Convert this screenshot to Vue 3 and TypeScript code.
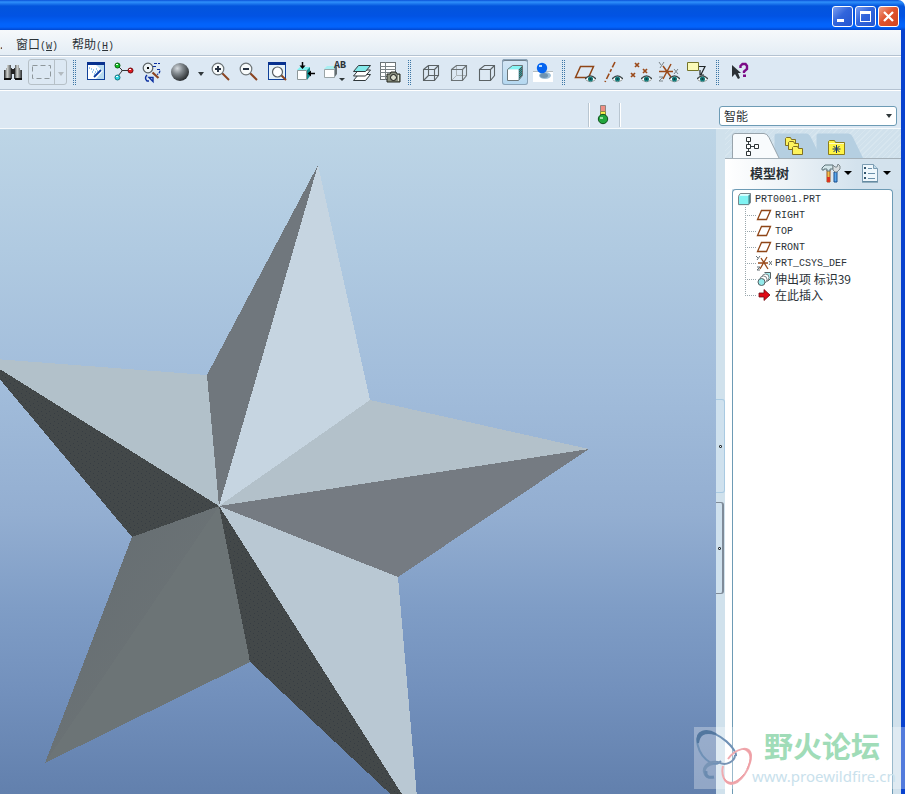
<script setup lang="ts">
import { ref } from 'vue'

interface Tool {
  icon: string
  label: string
  menu?: boolean
  badge?: string
}

interface TreeNode {
  icon: string
  text: string
  cjk?: boolean
}

const viewTools: Tool[] = [
  { icon: 'repaint', label: '重画' },
  { icon: 'spin-center', label: '旋转中心' },
  { icon: 'orient-mode', label: '定向模式' },
  { icon: 'sphere', label: '外观', menu: true },
  { icon: 'zoom-in', label: '放大' },
  { icon: 'zoom-out', label: '缩小' },
  { icon: 'refit', label: '重新调整' },
  { icon: 'reorient', label: '重定向' },
  { icon: 'saved-views', label: '已保存视图', badge: 'AB' },
  { icon: 'layers', label: '层' },
  { icon: 'view-manager', label: '视图管理器' },
]

const displayTools: Tool[] = [
  { icon: 'wireframe', label: '线框' },
  { icon: 'hidden-line', label: '隐藏线' },
  { icon: 'no-hidden', label: '无隐藏线' },
  { icon: 'shaded', label: '着色' },
  { icon: 'realism', label: '增强的真实感' },
]

const datumTools: Tool[] = [
  { icon: 'planes', label: '平面显示' },
  { icon: 'axes', label: '轴显示' },
  { icon: 'points', label: '点显示' },
  { icon: 'csys', label: '坐标系显示' },
  { icon: 'notes', label: '注释显示' },
]

const treeNodes: TreeNode[] = [
  { icon: 'n-plane', text: 'RIGHT' },
  { icon: 'n-plane', text: 'TOP' },
  { icon: 'n-plane', text: 'FRONT' },
  { icon: 'n-csys', text: 'PRT_CSYS_DEF' },
  { icon: 'n-protrusion', text: '伸出项 标识39', cjk: true },
  { icon: 'n-insert', text: '在此插入', cjk: true },
]

const tabs: Tool[] = [
  { icon: 't-tree', label: '模型树' },
  { icon: 't-folders', label: '文件夹浏览器' },
  { icon: 't-favorites', label: '收藏夹' },
]

const display = ref('shaded')
const activeTab = ref('t-tree')
const filter = ref('智能')
</script>

<template>
  <div class="window">
    <svg class="sprite" aria-hidden="true">
      <defs>
        <radialGradient id="gray-ball" cx="0.35" cy="0.3" r="0.75">
          <stop offset="0" stop-color="#d5dade" />
          <stop offset="0.4" stop-color="#82898e" />
          <stop offset="1" stop-color="#24282b" />
        </radialGradient>
        <linearGradient id="barrel" x1="0" x2="1" y1="0" y2="0">
          <stop offset="0" stop-color="#15181a" />
          <stop offset="0.4" stop-color="#d2d5d2" />
          <stop offset="1" stop-color="#2a2d2f" />
        </linearGradient>
        <pattern id="teal-check" width="2" height="2" patternUnits="userSpaceOnUse">
          <rect width="2" height="2" fill="#4b5254" />
          <rect width="1" height="1" fill="#2aa0a0" />
          <rect x="1" y="1" width="1" height="1" fill="#2aa0a0" />
        </pattern>
      </defs>

      <symbol id="eye" viewBox="0 0 12 8">
        <path d="M0 4 L3 1 H9 L12 4 L9 7 H3 Z" fill="#fff" />
        <path d="M0 4 Q6 -3 12 4" fill="none" stroke="#3c4446" stroke-width="1.4" />
        <path d="M1 5 Q6 9 11 5" fill="none" stroke="#8b8f8f" />
        <circle cx="6" cy="4" r="2.8" fill="#127b7a" />
        <rect x="5" y="3" width="2" height="2" fill="#103b40" />
      </symbol>

      <symbol id="binoculars" viewBox="0 0 24 24">
        <path d="M6 5h4v3h1v11H3v-9h2V8h1z" fill="url(#barrel)" />
        <path d="M14 5h4v3h1v2h2v9h-8V8h1z" fill="url(#barrel)" />
        <path d="M10 9h4v5h-4z" fill="#222" />
        <path d="M3 18h7v2H3zM14 18h7v2h-7z" fill="#111" />
      </symbol>

      <symbol id="repaint" viewBox="0 0 24 24">
        <rect x="3.500" y="2.500" width="17" height="17" fill="#fff" stroke="#11419a" />
        <path d="M12 5h8v14h-8l7-8z" fill="#b9dcf0" />
        <path d="M3 2h18v3H3z" fill="#08318e" />
        <path d="M10 17l7-7" stroke="#0b3da0" stroke-width="1.800" />
        <path d="M5 8h1M7 9h1M9 10h1M11 12h1M8 12h1M10 14h1M12 9h1M13 11h1" stroke="#2b8bd8" />
      </symbol>

      <symbol id="spin-center" viewBox="0 0 24 24">
        <path d="M6 6l4 4v1l-4 5M10 10.500h7" fill="none" stroke="#333" />
        <circle cx="5.500" cy="5.500" r="2.500" fill="#0fc322" stroke="#0a5d12" />
        <circle cx="5.500" cy="17.500" r="2.500" fill="#2fd7e4" stroke="#14747d" />
        <circle cx="18.500" cy="10.500" r="2.500" fill="#e01a22" stroke="#6e0b10" />
        <path d="M4 4h2v1H4zM4 16h2v1H4zM17 9h2v1h-2z" fill="#fff" />
      </symbol>

      <symbol id="orient-mode" viewBox="0 0 24 24">
        <path d="M12.500 12.500l6 5.500" stroke="#8a4421" stroke-width="2.300" />
        <circle cx="8" cy="8" r="4.800" fill="#eef4f6" stroke="#596063" stroke-width="1.200" />
        <path d="M7 7h2v2H7z" fill="#000" />
        <path d="M14 3.500h6M13 6.500h3M17 9.500h3q0 4-3 5" fill="none" stroke="#0b2fa0" stroke-width="1.200" stroke-dasharray="3 1" />
        <path d="M7 15q-3 3 0 6h2M13 17.500H9l4 4z" fill="none" stroke="#0b2fa0" stroke-width="1.400" />
      </symbol>

      <symbol id="sphere" viewBox="0 0 24 24">
        <circle cx="12" cy="12" r="9" fill="url(#gray-ball)" />
      </symbol>

      <symbol id="zoom-in" viewBox="0 0 24 24">
        <path d="M13 13l7 7" stroke="#8a4421" stroke-width="2" />
        <circle cx="9" cy="9" r="5.800" fill="#f8fbfb" stroke="#6d7477" stroke-width="1.200" />
        <path d="M8 6h2v2h2v2h-2v2H8v-2H6V8h2z" fill="#26303f" />
      </symbol>

      <symbol id="zoom-out" viewBox="0 0 24 24">
        <path d="M13 13l7 7" stroke="#8a4421" stroke-width="2" />
        <circle cx="9" cy="9" r="5.800" fill="#f8fbfb" stroke="#6d7477" stroke-width="1.200" />
        <path d="M6 8h6v2H6z" fill="#26303f" />
      </symbol>

      <symbol id="refit" viewBox="0 0 24 24">
        <rect x="3.500" y="2.500" width="17" height="17" fill="#e6f2f8" stroke="#11419a" />
        <path d="M3 2h18v3H3z" fill="#08318e" />
        <path d="M16 15l5 5" stroke="#8a4421" stroke-width="2" />
        <circle cx="12.500" cy="12" r="5" fill="#fff" stroke="#596063" stroke-width="1.200" />
      </symbol>

      <symbol id="reorient" viewBox="0 0 24 24">
        <path d="M4 10l3-3h10l-3 3z" fill="#7ff0f0" />
        <path d="M14 10l3-3v9l-3 4z" fill="#168f90" />
        <path d="M4.500 10.500h9v9h-9z" fill="#fff" stroke="#8d9799" />
        <path d="M9.500 2v5M16 13.500h6" stroke="#000" stroke-width="1.500" />
        <path d="M6.500 5.500h6l-3 3.500zM18 10.500v6L14.500 13.500z" fill="#000" />
      </symbol>

      <symbol id="saved-views" viewBox="0 0 24 24">
        <path d="M3 9l3-3h10l-3 3z" fill="#a9eff2" />
        <path d="M13 9l3-3v8l-3 4z" fill="#646d70" />
        <path d="M3.500 9.500h10v8h-10z" fill="#fff" stroke="#9aa4a7" />
        <path d="M18 18h6l-3 3z" fill="#30383b" />
      </symbol>

      <symbol id="layers" viewBox="0 0 24 24">
        <g stroke="#30383b" stroke-linejoin="round">
          <path d="M4.500 20.500l5-6h12l-5 6z" fill="#fff" />
          <path d="M4.500 16l5-6h12l-5 6z" fill="#fff" />
          <path d="M4.500 11.500l5-6h12l-5 6z" fill="#83e9ea" />
        </g>
      </symbol>

      <symbol id="view-manager" viewBox="0 0 24 24">
        <rect x="3.500" y="2.500" width="15" height="17" fill="#fff" stroke="#6b7376" />
        <path d="M3 6.500h16M3 9.500h16M3 12.500h16M3 16.500h16M8.500 2v18" stroke="#7c8487" />
        <path d="M10 14h3l1-2h5l1 2h3v8H10z" fill="#8a8f80" stroke="#23261f" />
        <circle cx="16.500" cy="17.500" r="3" fill="#d9dccb" stroke="#111" />
        <path d="M21 15h1v6h-1z" fill="#e0e3d5" />
      </symbol>

      <symbol id="wireframe" viewBox="0 0 24 24">
        <path d="M4.500 9.500h11v11h-11zM9.500 5.500h10v10h-10zM4.500 9.500l5-4M15.500 9.500l4-4M15.500 20.500l4-5M4.500 20.500l5-5" fill="none" stroke="#5b6265" stroke-width="1.100" />
      </symbol>

      <symbol id="hidden-line" viewBox="0 0 24 24">
        <path d="M9.500 5.500v10h10M4.500 20.500l5-5" fill="none" stroke="#adb5b9" />
        <path d="M4.500 9.500h11v11h-11zM4.500 9.500l5-4h10v10l-4 5M15.500 9.500l4-4" fill="none" stroke="#6b7275" stroke-width="1.100" />
      </symbol>

      <symbol id="no-hidden" viewBox="0 0 24 24">
        <path d="M4.500 9.500h11v11h-11zM4.500 9.500l5-4h10v10l-4 5M15.500 9.500l4-4" fill="none" stroke="#5b6265" stroke-width="1.100" />
      </symbol>

      <symbol id="shaded" viewBox="0 0 24 24">
        <path d="M4.500 9.500l5-4h10l-4 4z" fill="#86f4f3" />
        <path d="M15.500 9.500l4-4v10l-4 5z" fill="url(#teal-check)" />
        <path d="M4.500 9.500h11v11h-11z" fill="#fff" />
        <path d="M15.500 20.500h-11v-11l5-4h10v10z" fill="none" stroke="#6c7679" />
      </symbol>

      <symbol id="realism" viewBox="0 0 24 24">
        <path d="M2 11h20v11H2z" fill="#fff" />
        <path d="M2 11.500h20" stroke="#b4bcc0" />
        <ellipse cx="14" cy="15.500" rx="6" ry="3.500" fill="#9cbdd6" />
        <ellipse cx="13" cy="15.500" rx="4" ry="2.500" fill="#6f93b0" />
        <circle cx="11" cy="8" r="5.200" fill="#0564f0" />
        <path d="M8 5h3v2H8z" fill="#b7dcff" />
      </symbol>

      <symbol id="planes" viewBox="0 0 24 24">
        <path d="M7.500 6.500h13l-5 11h-13z" fill="none" stroke="#8f4516" stroke-width="1.500" />
        <use href="#eye" x="12" y="15" width="11" height="8" />
      </symbol>

      <symbol id="axes" viewBox="0 0 24 24">
        <path d="M14 2L4 22" stroke="#9a4a1a" stroke-width="1.600" stroke-dasharray="6 2 3 2" />
        <use href="#eye" x="11" y="15" width="11" height="8" />
      </symbol>

      <symbol id="points" viewBox="0 0 24 24">
        <path d="M6 3l4 4m0-4l-4 4M14 9l4 4m0-4l-4 4M2 13l4 4m0-4l-4 4" stroke="#9a4a1a" stroke-width="1.700" />
        <use href="#eye" x="12" y="15" width="11" height="8" />
      </symbol>

      <symbol id="csys" viewBox="0 0 24 24">
        <path d="M2 11.500h14M6 19l8-15M6 6l8 11" stroke="#9a4a1a" stroke-width="1.500" />
        <path d="M2 2l2 3m3-3L3 8M17 9l4 5m0-5l-4 5M2 17h4l-4 4h4" fill="none" stroke="#7b8489" />
        <use href="#eye" x="12" y="15" width="11" height="8" />
      </symbol>

      <symbol id="notes" viewBox="0 0 24 24">
        <path d="M2.500 2.500h11v8h-11z" fill="#fbfbb8" stroke="#75752a" />
        <path d="M14 6.500h6l-4 8M15 10v5h4" fill="none" stroke="#202628" stroke-width="1.200" />
        <use href="#eye" x="12" y="15" width="11" height="8" />
      </symbol>

      <symbol id="help" viewBox="0 0 24 24">
        <path d="M5 5v12l3-3 3 5 2-1-2-5h3z" fill="#2b3136" />
        <path d="M13.500 8V6l2-2h3l1.500 2v3l-3 2.500V13" fill="none" stroke="#7b0b86" stroke-width="2.400" />
        <path d="M16 14.500h3V17h-3z" fill="#7b0b86" />
      </symbol>

      <symbol id="n-part" viewBox="0 0 14 14">
        <path d="M1 3l2-2h10l-2 2z" fill="#d9ffff" />
        <path d="M11 3l2-2v10l-2 2z" fill="#3b8b91" />
        <path d="M1 3h10v10H1z" fill="#7ff3f3" />
        <path d="M.500 12.500v-9l2-3h11v10l-2 2z" fill="none" stroke="#69777c" />
      </symbol>
      <symbol id="n-plane" viewBox="0 0 16 16">
        <path d="M5.500 3.500h9l-4 9h-9z" fill="#fff" stroke="#8f4516" stroke-width="1.300" />
      </symbol>
      <symbol id="n-csys" viewBox="0 0 16 16">
        <path d="M2 8h10M4 14l7-12M5 3l7 11" stroke="#9a4a1a" stroke-width="1.300" />
        <path d="M0 1l2 2m2-2L1 5M13 6l3 4m0-4l-3 4M1 12h3l-3 3h3" fill="none" stroke="#667075" />
      </symbol>
      <symbol id="n-protrusion" viewBox="0 0 16 16">
        <path d="M8.500 1.500h6v6l-3 3" fill="#a9eff0" stroke="#566063" />
        <circle cx="9.500" cy="6.500" r="3.500" fill="#fff" stroke="#7c8588" />
        <circle cx="7.500" cy="8.500" r="3.500" fill="#fff" stroke="#7c8588" />
        <circle cx="5.500" cy="11" r="3.500" fill="#93eaeb" stroke="#566063" />
      </symbol>
      <symbol id="n-insert" viewBox="0 0 16 16">
        <path d="M3 6h5V2.500L14 8l-6 5.500V10H3z" fill="#e00b17" stroke="#6c0a10" stroke-width="0.800" />
      </symbol>

      <symbol id="t-tree" viewBox="0 0 20 20">
        <path d="M5.500 5v10M8 10.500h5" stroke="#3c4447" />
        <path d="M3.500 1.500h4v4h-4zM3.500 8.500h4v4h-4zM3.500 15.500h4v4h-4zM11.500 8.500h4v4h-4z" fill="#fff" stroke="#2d3437" />
      </symbol>
      <symbol id="t-folders" viewBox="0 0 20 20">
        <g fill="#fdf35c" stroke="#806f22">
          <path d="M1.500 9.500v-7l1-1h4l1 2h4v6z" />
          <path d="M4.500 13.500v-7l1-1h4l1 2h4v6z" />
          <path d="M8.500 18.500v-7l1-1h4l1 2h4v6z" />
        </g>
      </symbol>
      <symbol id="t-favorites" viewBox="0 0 20 20">
        <path d="M2.500 18.500v-13l1-1h5l1 2h9v12z" fill="#fff445" stroke="#8c7c1b" />
        <path d="M3 7.500h15" stroke="#fffcc5" />
        <path d="M10.500 9v8M6.500 13h8M7.500 10l6 6m0-6l-6 6" stroke="#14306f" />
      </symbol>
    </svg>

    <header class="titlebar">
      <button class="caption" aria-label="最小化">
        <svg viewBox="0 0 19 19"><path d="M4 12h7v3H4z" fill="#fff" /></svg>
      </button>
      <button class="caption" aria-label="最大化">
        <svg viewBox="0 0 19 19"><path d="M4 4h11v11H4zM5 7v7h9V7z" fill="#fff" fill-rule="evenodd" /></svg>
      </button>
      <button class="caption close" aria-label="关闭">
        <svg viewBox="0 0 19 19"><path d="M5 5l9 9m0-9l-9 9" stroke="#fff" stroke-width="2.300" /></svg>
      </button>
    </header>

    <div class="body">
      <nav class="menubar">
        <span class="clipped">.</span>
        <button class="menu">窗口<span class="key">(<u>W</u>)</span></button>
        <button class="menu">帮助<span class="key">(<u>H</u>)</span></button>
      </nav>

      <div class="toolbar">
        <button class="tool lead" aria-label="查找"><svg><use href="#binoculars" /></svg></button>
        <div class="split">
          <button class="split-main" aria-label="选取框" disabled>
            <svg viewBox="0 0 22 16"><rect x="1.500" y="1.500" width="18" height="13" fill="none" stroke="#8e979b" stroke-dasharray="5 3" /></svg>
          </button>
          <button class="split-more" aria-label="更多选取方式" disabled><i class="caret"></i></button>
        </div>
        <span class="grip"></span>
        <template v-for="t in viewTools" :key="t.icon">
          <button class="tool" :aria-label="t.label">
            <svg><use :href="'#' + t.icon" /></svg>
            <span v-if="t.badge" class="badge">{{ t.badge }}</span>
          </button>
          <button v-if="t.menu" class="more" :aria-label="t.label + '选项'"><i class="caret"></i></button>
        </template>
        <span class="grip"></span>
        <button
          v-for="t in displayTools"
          :key="t.icon"
          class="tool"
          :class="{ active: display === t.icon }"
          :aria-label="t.label"
          @click="display = t.icon"
        >
          <svg><use :href="'#' + t.icon" /></svg>
        </button>
        <span class="grip"></span>
        <button v-for="t in datumTools" :key="t.icon" class="tool" :aria-label="t.label">
          <svg><use :href="'#' + t.icon" /></svg>
        </button>
        <span class="grip"></span>
        <button class="tool" aria-label="帮助"><svg><use href="#help" /></svg></button>
      </div>

      <div class="status">
        <div class="signal">
          <svg viewBox="0 0 12 20">
            <path d="M3.500.500h5v6h-5z" fill="#ef8e84" stroke="#8b8580" />
            <path d="M3.500 6.500h5v4h-5z" fill="#fbf04b" stroke="#8b8a45" />
            <circle cx="6" cy="14" r="4.700" fill="#22a63d" stroke="#0d4f1b" />
            <path d="M3 12h3v2H3z" fill="#9be7a4" />
          </svg>
        </div>
        <label class="filter">
          <select v-model="filter" aria-label="选取过滤器">
            <option>智能</option>
            <option>特征</option>
            <option>几何</option>
          </select>
          <i class="caret"></i>
        </label>
      </div>

      <div class="workspace">
        <main class="viewport">
          <svg viewBox="0 129 716 665" preserveAspectRatio="xMinYMin slice" role="img" aria-label="五角星模型" shape-rendering="crispEdges">
            <defs>
              <linearGradient id="tail" x1="0" y1="0" x2="1" y2="1">
                <stop offset="0" stop-color="#646c71" />
                <stop offset="1" stop-color="#707778" />
              </linearGradient>
              <pattern id="dots" width="8" height="8" patternUnits="userSpaceOnUse">
                <rect width="8" height="8" fill="#434849" />
                <path d="M1 3h1v1H1zM5 1h1v1H5zM2 7h1v1H2zM6 5h1v1H6z" fill="#373d43" />
              </pattern>
            </defs>
            <polygon points="-18,358 207,375 219,506" fill="#b2c1ca" />
            <polygon points="-18,358 219,506 132,537" fill="url(#dots)" />
            <polygon points="207,375 318,165 219,506" fill="#70777d" />
            <polygon points="318,165 370,400 219,506" fill="#c6d5e1" />
            <polygon points="370,400 589,449 219,506" fill="#b3c1ca" />
            <polygon points="589,449 398,577 219,506" fill="#757b82" />
            <polygon points="398,577 419,821 219,506" fill="#b9c8d3" />
            <polygon points="419,821 250,662 219,506" fill="url(#dots)" />
            <polygon points="250,662 45,763 219,506" fill="#6c7476" />
            <polygon points="45,763 132,537 219,506" fill="url(#tail)" />
          </svg>
        </main>

        <div class="splitter">
          <button class="handle" aria-label="折叠浏览器"><i></i></button>
          <button class="handle dark" aria-label="折叠导航器"><i></i></button>
        </div>

        <aside class="navigator">
          <div class="tabs">
            <button
              v-for="t in tabs"
              :key="t.icon"
              class="tab"
              :class="{ current: activeTab === t.icon }"
              :aria-label="t.label"
              @click="activeTab = t.icon"
            >
              <svg class="shape" viewBox="0 0 48 25"><path d="M.500 25V3q0-2.500 2.500-2.500h29q3 0 5 4L47 25" /></svg>
              <svg class="glyph"><use :href="'#' + t.icon" /></svg>
            </button>
          </div>
          <div class="tree-head">
            <h2>模型树</h2>
            <button class="head-button" aria-label="设置">
              <svg viewBox="0 0 20 22">
                <path d="M6 8h3v12H6z" fill="#f2c04a" stroke="#a3561a" />
                <path d="M1 8V6l3-3h8v4H9v2H6V7H3v1z" fill="#d3e6ea" stroke="#5c7278" />
                <path d="M13 10h3v10h-3z" fill="#5aa7ec" stroke="#174c8c" />
                <path d="M12 8V3l2 2h2l1-3 2 2v3l-3 3h-2z" fill="#d7dcde" stroke="#7d888c" />
                <path d="M6 15h3v5H6z" fill="#dc3420" />
              </svg>
              <i class="caret"></i>
            </button>
            <button class="head-button" aria-label="显示">
              <svg viewBox="0 0 20 22">
                <path d="M2.500 2.500h11l4 4v13h-15z" fill="#eef7fc" stroke="#7b9cb2" />
                <path d="M13.500 2.500v4h4" fill="#c1dcea" stroke="#7b9cb2" />
                <path d="M8 6.500h4M8 11.500h7M8 16.500h7" stroke="#6a90aa" />
                <path d="M4 5h2v2H4zM4 10h2v2H4zM4 15h2v2H4z" fill="#33566e" />
                <path d="M2 20h16" stroke="#4f7890" />
              </svg>
              <i class="caret"></i>
            </button>
          </div>
          <div class="tree">
            <div class="root"><svg><use href="#n-part" /></svg><span>PRT0001.PRT</span></div>
            <ul>
              <li v-for="n in treeNodes" :key="n.text">
                <svg><use :href="'#' + n.icon" /></svg><span :class="{ cjk: n.cjk }">{{ n.text }}</span>
              </li>
            </ul>
          </div>
        </aside>
      </div>
    </div>

    <div class="watermark">
      <svg viewBox="0 0 60 62" fill="none">
        <path d="M42 29C43 23 26 4 10 5C-2 7 3 28 17 36C23 38 25 36 27 34" stroke="#6f91b6" stroke-width="2" />
        <path d="M4 16C1 3 13 2 22 7C9 4 5 8 4 16Z" fill="#52779f" stroke="#52779f" stroke-width="2" />
        <path d="M41 28C41 34 32 40 24 35C13 33 5 43 13 50C8 44 12 38 19 37" stroke="#7794b5" stroke-width="2" />
        <path d="M12 44C11 50 15 51 20 50" stroke="#6a8bb0" stroke-width="3" />
        <path d="M34 32C41 22 56 17 57 28C57 42 46 57 37 57C30 56 27 47 29 39" stroke="#efabb0" stroke-width="2" />
        <path d="M49 22C60 22 58 34 53 42C58 31 57 25 49 22ZM50 47C43 58 32 59 30 51C36 59 43 55 50 47Z" fill="#efa0a6" stroke="#efa0a6" />
      </svg>
      <div class="mark-text">
        <strong>野火论坛</strong>
        <span>www.proewildfire.cn</span>
      </div>
    </div>
  </div>
</template>

<style>
body {
  background: #fff;
}
</style>

<style scoped>
.window {
  position: relative;
  display: flex;
  flex-direction: column;
  height: 100vh;
  overflow: hidden;
  color: #2b3237;
  font: 12px "Noto Sans CJK SC", sans-serif;
}

button {
  padding: 0;
  border: 0;
  background: none;
  color: inherit;
  font: inherit;
}

.sprite {
  position: absolute;
  width: 0;
  height: 0;
}

.titlebar {
  display: flex;
  flex: none;
  justify-content: flex-end;
  gap: 2px;
  height: 30px;
  box-sizing: border-box;
  padding: 6px 6px 0 0;
  border-radius: 0 7px 0 0;
  background: linear-gradient(#0a50d8 0, #2f90fb 2px, #2481f3 3px, #0355dd 6px, #0253e3 16px, #0263fb 24px, #0363fb 27px, #0147cf 30px);
}

.caption {
  width: 21px;
  height: 21px;
  box-sizing: border-box;
  border: 1px solid #fff;
  border-radius: 3px;
  background: linear-gradient(135deg, #7c9ff0, #3165dc 45%, #2456d0);
}

.caption svg {
  display: block;
  width: 19px;
  height: 19px;
}

.caption.close {
  background: linear-gradient(135deg, #f0a088, #e0532d 45%, #cf4420);
}

.body {
  display: flex;
  flex: 1;
  flex-direction: column;
  min-height: 0;
  border-right: 4px solid #0842cf;
  background: #dce8f3;
}

.menubar {
  display: flex;
  flex: none;
  align-items: center;
  gap: 14px;
  height: 25px;
  padding-top: 2px;
  box-sizing: border-box;
  background: linear-gradient(#f6f9fb, #e4edf5);
}

.clipped {
  width: 2px;
  overflow: hidden;
}

.menu {
  line-height: 20px;
}

.key {
  font: 10px "Liberation Mono", monospace;
}

.toolbar {
  display: flex;
  flex: none;
  align-items: center;
  height: 34px;
  box-sizing: border-box;
  padding-bottom: 1px;
  border-top: 1px solid #b4c2d1;
  box-shadow: inset 0 1px #fff;
}

.tool {
  position: relative;
  display: flex;
  flex: none;
  align-items: center;
  justify-content: center;
  width: 28px;
  height: 26px;
}

.tool svg {
  width: 24px;
  height: 24px;
}

.tool.active {
  width: 26px;
  margin: 0 1px;
  border-radius: 3px;
  background: linear-gradient(#d5e7f5, #b3d7f0);
  box-shadow: inset 0 0 0 1px #8ba3b7, inset 0 2px #71818d;
}

.tool.lead {
  width: 26px;
}

.badge {
  position: absolute;
  top: 1px;
  right: 1px;
  font: 700 10px/11px "Liberation Mono", monospace;
}

.split {
  display: flex;
  margin: 0 1px 0 2px;
  width: 39px;
  height: 26px;
  box-sizing: border-box;
  border: 1px solid #b6c0c7;
  border-radius: 3px;
}

.split-main {
  flex: 1;
  border-right: 1px solid #b6c0c7;
}

.split-main svg {
  display: block;
  width: 22px;
  height: 16px;
  margin: 0 auto;
}

.split-more {
  width: 11px;
}

.split-more .caret {
  border-top-color: #b3bbc0;
}

.more {
  width: 13px;
  height: 26px;
}

.caret {
  display: inline-block;
  flex: none;
  border: 3px solid transparent;
  border-top: 4px solid #30383b;
  border-bottom: 0;
  vertical-align: middle;
}

.grip {
  flex: none;
  width: 4px;
  height: 27px;
  margin: 0 5px;
  background: repeating-linear-gradient(#dce8f3 0 1px, transparent 1px 2px), repeating-linear-gradient(90deg, #3c76a5 0 1px, #dce8f3 1px 2px);
}

.status {
  display: flex;
  flex: none;
  justify-content: flex-end;
  gap: 99px;
  height: 40px;
  box-sizing: border-box;
  padding-right: 4px;
  border-top: 1px solid #b4c2d1;
  border-bottom: 1px solid #f7fafc;
  box-shadow: inset 0 1px #fff;
}

.signal {
  display: flex;
  align-items: center;
  width: 32px;
  height: 24px;
  box-sizing: border-box;
  margin-top: 13px;
  padding-left: 8px;
  border-right: 1px solid #b9c6d1;
  border-left: 1px solid #b9c6d1;
  box-shadow: 1px 0 #fff, inset 1px 0 #fff;
}

.signal svg {
  width: 12px;
  height: 20px;
}

.filter {
  position: relative;
  width: 178px;
  height: 20px;
  margin-top: 16px;
}

.filter select {
  width: 100%;
  height: 100%;
  padding: 0 4px;
  appearance: none;
  border: 1px solid #6d9bb5;
  border-radius: 3px;
  background: #fff;
  color: #2b3237;
  font: 12px/18px "Noto Sans CJK SC", sans-serif;
}

.filter .caret {
  position: absolute;
  top: 8px;
  right: 5px;
  pointer-events: none;
}

.workspace {
  display: flex;
  flex: 1;
  min-height: 0;
}

.viewport {
  flex: 1;
  min-width: 0;
  overflow: hidden;
  background: linear-gradient(#bdd5e6 0, #b0cae1 18%, #a2bddb 38%, #93aed1 58%, #7f9dc6 72%, #7391bd 84%, #6280ad 100%);
}

.viewport svg {
  display: block;
  width: 100%;
  height: 100%;
}

.splitter {
  display: flex;
  flex: none;
  flex-direction: column;
  gap: 9px;
  width: 9px;
  box-sizing: border-box;
  padding-top: 270px;
  background: #d0e1ec;
}

.handle {
  display: flex;
  align-items: center;
  justify-content: center;
  width: 9px;
  height: 94px;
  box-sizing: border-box;
  border: 1px solid #a9cae2;
  border-left: 0;
  border-radius: 0 3px 3px 0;
  background: #cfe1ee;
}

.handle.dark {
  width: 8px;
  height: 92px;
  border: 1px solid #7f8b98;
  border-right-width: 2px;
  border-left: 0;
}

.handle i {
  width: 1px;
  height: 1px;
  border: 1px solid #293238;
  border-radius: 1px;
  background: #fff;
}

.navigator {
  display: flex;
  flex: none;
  flex-direction: column;
  width: 176px;
  box-sizing: border-box;
  padding-right: 8px;
  background: linear-gradient(90deg, #fff 7px, #d1e1ec 7px);
}

.tabs {
  display: flex;
  flex: none;
  height: 30px;
  box-sizing: border-box;
  margin-right: -8px;
  padding: 4px 0 0 7px;
  border-bottom: 1px solid #a5b1b9;
  background: repeating-linear-gradient(135deg, #d0e1ec 0 3px, #d7e6ef 3px 4px);
}

.tab {
  position: relative;
  display: flex;
  align-items: center;
  width: 48px;
  height: 25px;
  margin-right: -6px;
  padding: 1px 0 0 10px;
  box-sizing: border-box;
}

.tab.current {
  z-index: 1;
}

.shape {
  position: absolute;
  inset: 0;
  width: 48px;
  height: 25px;
  fill: #b5cfe1;
}

.current .shape {
  fill: #f8fbfd;
  stroke: #98a4ac;
}

.glyph {
  position: relative;
  width: 20px;
  height: 20px;
}

.current .glyph {
  left: 4px;
}

.tab.current {
  padding-left: 7px;
}

.tree-head {
  display: flex;
  flex: none;
  align-items: center;
  height: 30px;
  margin-right: -8px;
  padding: 0 10px 2px 25px;
  box-sizing: border-box;
  background: linear-gradient(90deg, #fff, #edf3f7 35%, #d3e2ed 75%);
}

.tree-head h2 {
  flex: 1;
  margin: 0;
  font-size: 13px;
  line-height: 20px;
  font-weight: 700;
}

.head-button {
  display: flex;
  align-items: center;
  gap: 3px;
  margin-left: 8px;
}

.head-button svg {
  width: 20px;
  height: 22px;
}

.head-button .caret {
  border-width: 4px 4px 0;
  border-top-color: #000;
}

.tree {
  flex: 1;
  min-height: 0;
  margin-left: 7px;
  padding-top: 1px;
  border: 1px solid #6d9bb5;
  border-bottom: 0;
  border-radius: 4px 4px 0 0;
  background: #fff;
  font: 10px/14px "Liberation Mono", monospace;
}

.root,
.tree li {
  display: flex;
  align-items: center;
  height: 16px;
  white-space: pre;
}

.tree span {
  padding-top: 2px;
}

.root {
  gap: 4px;
  padding-left: 5px;
}

.root svg {
  width: 13px;
  height: 13px;
}

.tree ul {
  margin: 0 0 0 12px;
  padding: 0;
  list-style: none;
}

.tree li {
  gap: 3px;
  background:
    repeating-linear-gradient(90deg, #9aa7ad 0 1px, transparent 1px 2px) 0 8px / 12px 1px no-repeat,
    repeating-linear-gradient(#9aa7ad 0 1px, transparent 1px 2px) 0 0 / 1px 16px no-repeat;
}

.tree li:last-child {
  background-size: 12px 1px, 1px 8px;
}

.tree li svg {
  width: 16px;
  height: 16px;
  margin-left: 11px;
}

.tree .cjk {
  padding-top: 0;
  font: 12px/16px "Noto Sans CJK SC", sans-serif;
}

.watermark {
  position: absolute;
  right: 0;
  bottom: 5px;
  display: flex;
  width: 211px;
  height: 62px;
  background: rgba(255, 255, 255, 0.3);
  pointer-events: none;
}

.watermark svg {
  flex: none;
  width: 60px;
  height: 62px;
}

.mark-text {
  display: flex;
  flex-direction: column;
  gap: 4px;
  margin-left: -2px;
}

.mark-text strong {
  padding-left: 12px;
  color: #a0dcb8;
  font-size: 29px;
  line-height: 36px;
  font-weight: 700;
}

.mark-text span {
  color: #c9e1ec;
  font: 15px/18px "Noto Sans", sans-serif;
}
</style>
